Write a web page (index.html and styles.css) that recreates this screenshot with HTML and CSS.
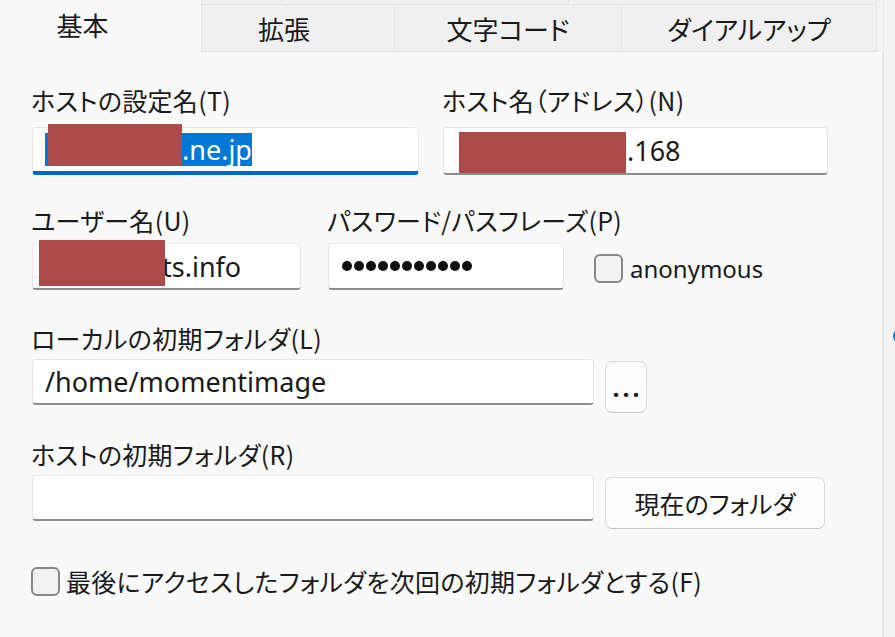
FILE: index.html
```html
<!DOCTYPE html>
<html lang="ja">
<head>
<meta charset="utf-8">
<title>ホストの設定</title>
<link rel="stylesheet" href="styles.css">
</head>
<body>
<div class="screen">
  <div class="dialog">
    <div class="tabbar">
      <div class="tab tab-active">基本</div>
      <div class="tab-group">
        <div class="tab-strip">
          <span class="strip-cell strip-a"></span>
          <span class="strip-cell strip-b"></span>
          <span class="strip-cell strip-c"></span>
        </div>
        <div class="tab-row">
          <div class="tab tab-kakucho">拡張</div>
          <div class="tab tab-moji">文字コード</div>
          <div class="tab tab-dial">ダイアルアップ</div>
        </div>
      </div>
    </div>

    <div class="panel">
      <div class="row row-host">
        <div class="field field-setting">
          <span class="lbl">ホストの設定名(T)</span>
          <div class="input input-tall focused">
            <span class="sel"><span class="hidden-part hp-setting"></span>.ne.jp</span>
            <span class="redact redact-setting"></span>
          </div>
        </div>
        <div class="field field-address">
          <span class="lbl">ホスト名（アドレス）(N)</span>
          <div class="input input-tall">
            <span class="hidden-part hp-address"></span>.168
            <span class="redact redact-address"></span>
          </div>
        </div>
      </div>

      <div class="row row-user">
        <div class="field field-user">
          <span class="lbl">ユーザー名(U)</span>
          <div class="input input-mid">
            <span class="hidden-part hp-user"></span>ts.info
            <span class="redact redact-user"></span>
          </div>
        </div>
        <div class="field field-pass">
          <span class="lbl">パスワード/パスフレーズ(P)</span>
          <div class="input input-mid pass">
            <span class="dots" aria-hidden="true"><i></i><i></i><i></i><i></i><i></i><i></i><i></i><i></i><i></i><i></i><i></i></span>
          </div>
        </div>
        <div class="check check-anon">
          <span class="cb"></span>
          <span class="check-text latin">anonymous</span>
        </div>
      </div>

      <div class="block block-local">
        <span class="lbl">ローカルの初期フォルダ(L)</span>
        <div class="line">
          <div class="input input-wide">/home/momentimage</div>
          <button class="btn btn-dots">...</button>
        </div>
      </div>

      <div class="block block-remote">
        <span class="lbl">ホストの初期フォルダ(R)</span>
        <div class="line">
          <div class="input input-wide"></div>
          <button class="btn btn-current">現在のフォルダ</button>
        </div>
      </div>

      <div class="check check-last">
        <span class="cb"></span>
        <span class="check-text">最後にアクセスしたフォルダを次回の初期フォルダとする(F)</span>
      </div>
    </div>
  </div>
  <div class="side"><span class="blue-dot"></span></div>
</div>
</body>
</html>
```

FILE: styles.css
```css
* { box-sizing: border-box; }

body {
  margin: 0;
  background: #f3f3f3;
  font-family: "Noto Sans CJK JP", "Noto Sans", sans-serif;
  color: #1a1a1a;
  overflow: hidden;
}

.screen {
  display: flex;
  width: 895px;
  height: 637px;
}

.dialog {
  width: 883px;
  display: flex;
  flex-direction: column;
}

.side {
  flex: 1;
  position: relative;
  background: #f3f3f3;
  border-left: 1px solid #e6e6e6;
}

.blue-dot {
  position: absolute;
  left: 9px;
  top: 329px;
  width: 14px;
  height: 14px;
  border-radius: 50%;
  background: #0a7bd0;
}

/* Tabs */
.tabbar {
  display: flex;
  height: 52px;
  width: 877px;
  flex-shrink: 0;
}

.tab {
  display: flex;
  align-items: center;
  justify-content: center;
  font-size: 26px;
  font-feature-settings: "palt";
  white-space: nowrap;
  color: #1a1a1a;
}

.tab-active {
  width: 202px;
  height: 52px;
  background: #f9f9f9;
  border-right: 1px solid #e4e4e4;
  padding-right: 36px;
  padding-bottom: 4px;
}

.tab-group {
  flex: 1;
  display: flex;
  flex-direction: column;
}

.tab-strip {
  height: 5px;
  display: flex;
  background: #f0f0f0;
  border-bottom: 1px solid #e4e4e4;
}

.strip-cell { height: 100%; border-right: 1px solid #e4e4e4; }
.strip-a { width: 80px; }
.strip-b { width: 287px; }
.strip-c { flex: 1; }

.tab-row {
  flex: 1;
  display: flex;
  background: #f0f0f0;
  border-bottom: 1px solid #e4e4e4;
}

.tab-row .tab { border-right: 1px solid #e4e4e4; padding-top: 1px; }
.tab-kakucho { width: 193px; padding-right: 28px; }
.tab-moji { width: 227px; }
.tab-dial { flex: 1; }

/* Panel */
.panel {
  flex: 1;
  background: #f9f9f9;
  border-right: 1px solid #e6e6e6;
  padding: 33px 0 0 31px;
}

.lbl {
  display: block;
  height: 30px;
  font-size: 25px;
  line-height: 30px;
  font-feature-settings: "palt";
  letter-spacing: 0.3px;
  white-space: nowrap;
  color: #1a1a1a;
}

.row { display: flex; align-items: flex-start; }

.field { display: flex; flex-direction: column; }

.input {
  position: relative;
  display: flex;
  align-items: center;
  background: #fff;
  border: 1px solid #e7e7e7;
  border-bottom: 2px solid #8e8e8e;
  border-radius: 4px;
  padding-left: 12px;
  font-family: "Noto Sans", sans-serif;
  font-size: 27px;
  color: #1a1a1a;
  white-space: nowrap;
}

.field .input, .line .input { margin-left: 1px; }

.input.focused { border-bottom: 4px solid #0067c0; }

.input-tall { height: 48px; margin-top: 12px; }
.input-mid { height: 47px; margin-top: 8px; }
.input-wide { width: 562px; height: 46px; }

.sel {
  display: inline-flex;
  align-items: center;
  height: 33px;
  background: #0078d4;
  color: #fff;
}

.hidden-part { display: inline-block; height: 1px; }
.hp-setting { width: 137px; }
.hp-address { width: 171px; }
.hp-user { width: 117px; }

.redact {
  position: absolute;
  background: #ad4b4b;
}
.redact-setting { left: 15px; top: -4px; width: 134px; height: 41px; }
.redact-address { left: 15px; top: 4px; width: 167px; height: 41px; }
.redact-user { left: 6px; top: -4px; width: 126px; height: 46px; }

.row-host { gap: 23px; }
.field-setting { width: 388px; }
.field-address { width: 386px; }

.row-user { margin-top: 30px; }
.field-user { width: 270px; }
.field-pass { width: 237px; margin-left: 26px; }

.pass { padding-left: 13px; }
.dots { display: flex; gap: 2px; }
.dots i {
  display: block;
  width: 10px;
  height: 10px;
  border-radius: 50%;
  background: #111;
}

.check { display: flex; align-items: center; }

.cb {
  display: block;
  width: 29px;
  height: 29px;
  flex-shrink: 0;
  border: 2px solid #878787;
  border-radius: 6px;
  background: #f2f2f2;
}

.check-text {
  font-size: 25px;
  font-feature-settings: "palt";
  letter-spacing: 0.3px;
  white-space: nowrap;
  color: #1a1a1a;
}

.latin { font-family: "Noto Sans", sans-serif; font-size: 24px; letter-spacing: 0; }

.check-anon {
  margin-left: 30px;
  margin-top: 38px;
  height: 47px;
  gap: 7px;
  padding-top: 3px;
}

.block-local { margin-top: 33px; }
.block-remote { margin-top: 26px; }

.line {
  display: flex;
  align-items: flex-start;
  gap: 11px;
  margin-top: 6px;
}

.btn {
  height: 52px;
  margin-top: 2px;
  background: #fdfdfd;
  border: 1px solid #dadada;
  border-bottom-color: #c6c6c6;
  border-radius: 7px;
  font-family: "Noto Sans CJK JP", sans-serif;
  font-size: 25px;
  font-feature-settings: "palt";
  color: #1a1a1a;
  padding: 0;
}

.btn-dots {
  width: 42px;
  font-family: "Noto Sans", sans-serif;
  letter-spacing: 3px;
  padding-left: 3px;
  font-weight: 700;
}

.btn-current { width: 220px; }

.check-last {
  margin-top: 37px;
  height: 30px;
  gap: 6px;
}
```
